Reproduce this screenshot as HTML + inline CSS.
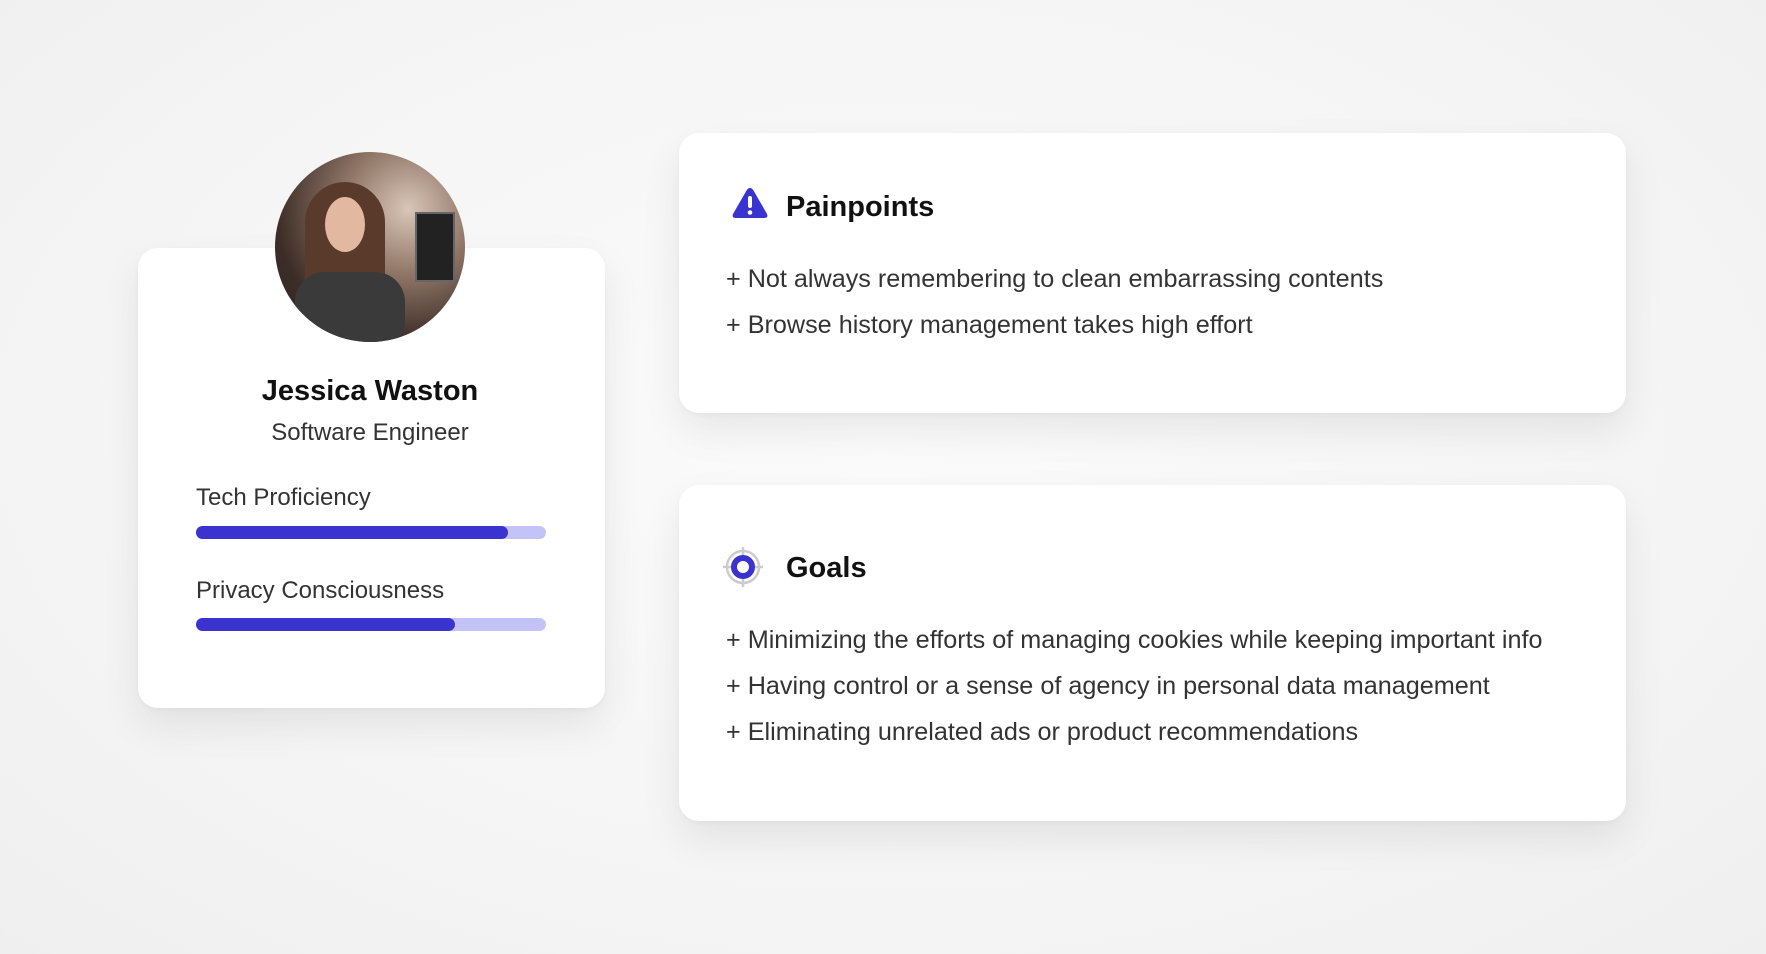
<!DOCTYPE html>
<html><head><meta charset="utf-8"><style>
*{margin:0;padding:0;box-sizing:border-box}
html,body{width:1766px;height:954px;overflow:hidden}
body{background:radial-gradient(ellipse at 50% 45%,#fbfbfb 0%,#f5f5f5 60%,#efefef 100%);font-family:"Liberation Sans",sans-serif;color:#222;position:relative}
.card{position:absolute;background:#fff;border-radius:20px;box-shadow:0 18px 40px rgba(0,0,0,0.08),0 2px 6px rgba(0,0,0,0.03)}
.abs{position:absolute;white-space:nowrap}
.bar{position:absolute;left:196px;width:350px;height:13px;border-radius:7px;background:#c4c3f8}
.bar i{position:absolute;left:0;top:0;height:13px;border-radius:7px;background:#3a33d0}
.line{position:absolute;left:726px;font-size:25.2px;color:#333;font-weight:300;white-space:nowrap}
h2{position:absolute;font-size:29px;font-weight:bold;color:#111}
</style></head><body>
<div class="card" style="left:138px;top:248px;width:467px;height:460px"></div>
<div class="abs" style="left:275px;top:152px;width:190px;height:190px;border-radius:50%;overflow:hidden;background:radial-gradient(circle at 70% 30%,#d9c6b8 0%,#8f7566 35%,#3c2d27 70%,#2a2220 100%)">
  <div style="position:absolute;left:30px;top:30px;width:80px;height:140px;border-radius:40px 40px 20px 20px;background:#5a3a2a"></div>
  <div style="position:absolute;left:50px;top:45px;width:40px;height:55px;border-radius:50%;background:#e2b9a0"></div>
  <div style="position:absolute;left:20px;top:120px;width:110px;height:80px;border-radius:30px;background:#3a3a3a"></div>
  <div style="position:absolute;left:140px;top:60px;width:40px;height:70px;background:#222;border:2px solid #666"></div>
</div>
<div class="abs" style="left:0;width:740px;text-align:center;top:375px;font-size:29px;font-weight:bold;color:#111">Jessica Waston</div>
<div class="abs" style="left:0;width:740px;text-align:center;top:419px;font-size:24px;color:#333;font-weight:300">Software Engineer</div>
<div class="abs" style="left:196px;top:484px;font-size:24px;color:#333">Tech Proficiency</div>
<div class="bar" style="top:526px"><i style="width:312px"></i></div>
<div class="abs" style="left:196px;top:577px;font-size:24px;color:#333">Privacy Consciousness</div>
<div class="bar" style="top:618px"><i style="width:259px"></i></div>

<div class="card" style="left:679px;top:133px;width:947px;height:280px"></div>
<svg class="abs" style="left:731px;top:186px" width="38" height="34" viewBox="0 0 38 34"><path d="M19 2 Q21 2 22.5 4.5 L36 28 Q37.5 32 33 32 L5 32 Q0.5 32 2 28 L15.5 4.5 Q17 2 19 2Z" fill="#3a33d0"/><rect x="17" y="10" width="4" height="12" rx="2" fill="#fff"/><circle cx="19" cy="26.5" r="2.3" fill="#fff"/></svg>
<h2 style="left:786px;top:191px">Painpoints</h2>
<div class="line" style="top:265px">+ Not always remembering to clean embarrassing contents</div>
<div class="line" style="top:311px">+ Browse history management takes high effort</div>

<div class="card" style="left:679px;top:485px;width:947px;height:336px"></div>
<svg class="abs" style="left:721px;top:545px" width="44" height="44" viewBox="0 0 44 44"><circle cx="22" cy="22" r="16" fill="none" stroke="#ccc" stroke-width="2.5"/><path d="M22 2V10M22 34V42M2 22H10M34 22H42" stroke="#ccc" stroke-width="2.5"/><circle cx="22" cy="22" r="9" fill="none" stroke="#3a33d0" stroke-width="6"/></svg>
<h2 style="left:786px;top:552px">Goals</h2>
<div class="line" style="top:626px">+ Minimizing the efforts of managing cookies while keeping important info</div>
<div class="line" style="top:672px">+ Having control or a sense of agency in personal data management</div>
<div class="line" style="top:718px">+ Eliminating unrelated ads or product recommendations</div>
</body></html>
